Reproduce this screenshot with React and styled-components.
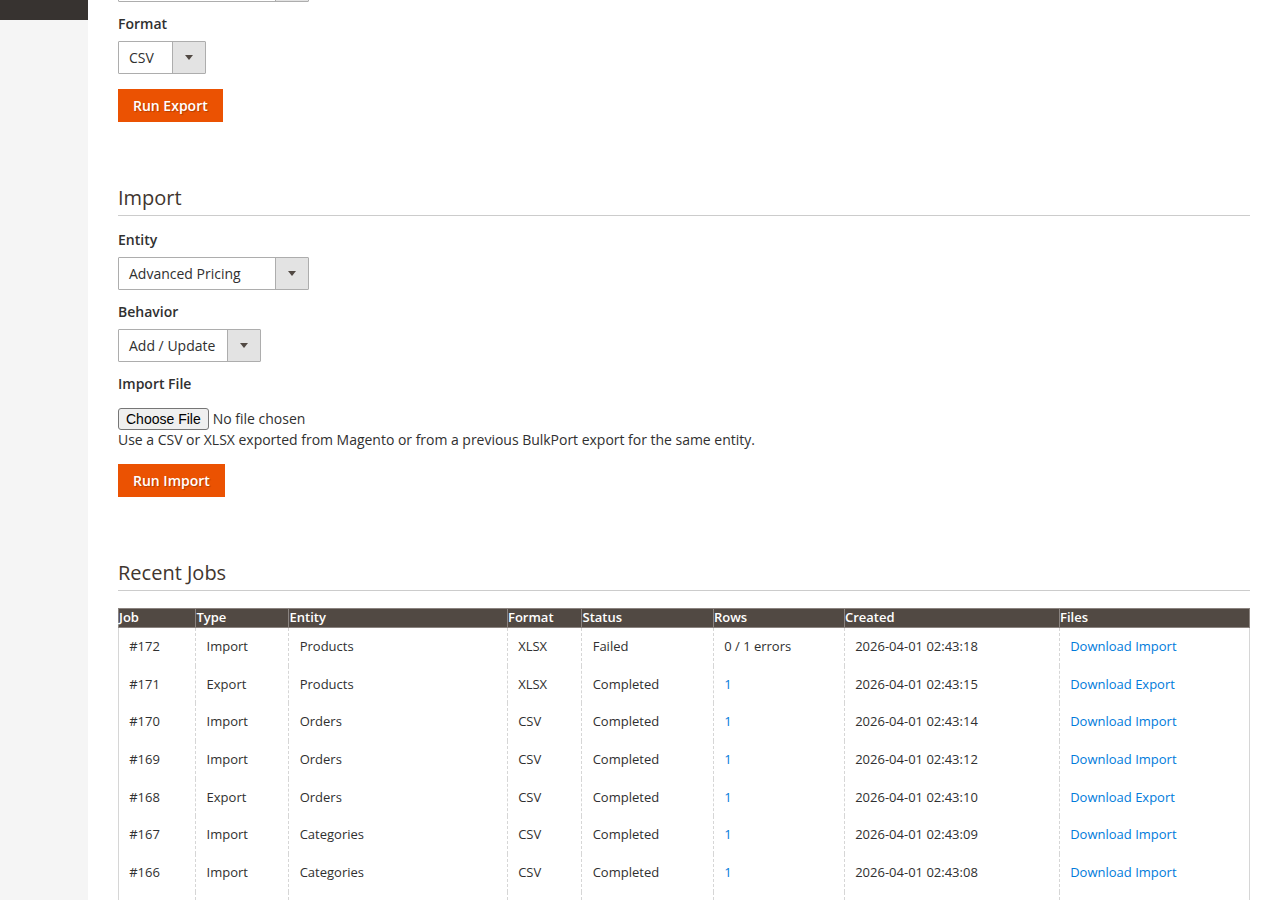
import React from 'react'
import styled, { createGlobalStyle } from 'styled-components'

const GlobalStyle = createGlobalStyle`
  html, body {
    margin: 0;
    height: 100%;
    overflow: hidden;
    background: #fff;
  }
  body {
    font-family: "Open Sans", "Liberation Sans", sans-serif;
    font-size: 14px;
    color: #303030;
  }
`

const Page = styled.div`
  display: flex;
  height: 900px;
  overflow: hidden;
`

const Sidebar = styled.aside`
  width: 88px;
  flex-shrink: 0;
  background: #f5f5f5;
`

const SidebarEnd = styled.div`
  height: 20px;
  background: #373330;
`

// the screenshot is scrolled, so the first select is cut off by the window
const Main = styled.main`
  flex: 1;
  min-width: 0;
  margin-top: -31px;
  padding: 0 30px;
`

const Field = styled.div`
  margin-bottom: ${(p) => (p.$last ? 15 : 12)}px;
`

const Label = styled.label`
  display: block;
  font-size: 14px;
  font-weight: 600;
  line-height: 19px;
  margin-bottom: 8px;
  color: #303030;
`

const SelectBox = styled.div`
  display: flex;
  width: ${(p) => p.$width}px;
  height: 33px;
  box-sizing: border-box;
  border: 1px solid #adadad;
  border-radius: 1px;
  background: #fff;
`

const SelectValue = styled.div`
  flex: 1;
  padding-left: 10px;
  font-size: 14px;
  line-height: 31px;
  color: #303030;
`

const SelectArrow = styled.div`
  width: 33px;
  box-sizing: border-box;
  display: flex;
  align-items: center;
  justify-content: center;
  background: #e3e3e3;
  border-left: 1px solid #adadad;

  &::after {
    content: '';
    border-style: solid;
    border-width: 5px 4px 0 4px;
    border-color: #514943 transparent transparent transparent;
  }
`

const PrimaryButton = styled.button`
  display: block;
  height: 33px;
  padding: 0 15px;
  border: 0;
  background: #eb5202;
  color: #fff;
  font-family: inherit;
  font-size: 14px;
  font-weight: 600;
  text-shadow: 1px 1px 1px rgba(0, 0, 0, 0.25);
  cursor: pointer;
`

const Section = styled.section`
  margin-top: 62px;
`

const SectionTitle = styled.h2`
  margin: 0 0 14px;
  padding-bottom: 3px;
  border-bottom: 1px solid #cccccc;
  font-size: 20px;
  font-weight: 400;
  line-height: 28px;
  color: #41362f;
`

const FileInput = styled.input`
  display: block;
  margin-top: 15px;
  height: 22px;
  font-family: inherit;
  font-size: 14px;
  color: #303030;

  &::file-selector-button {
    font-family: "Liberation Sans", Arial, sans-serif;
    font-size: 14px;
    height: 22px;
    padding: 0 7px;
    margin-right: 4px;
    border: 1px solid #767676;
    border-radius: 3px;
    background: #efefef;
    color: #000;
  }
`

const Hint = styled.div`
  font-size: 14px;
  line-height: 19px;
  letter-spacing: -0.02px;
  color: #303030;
`

const JobsTable = styled.table`
  width: 1131px;
  margin-top: 17px;
  table-layout: fixed;
  border-collapse: collapse;
  border-left: 1px solid #d6d6d6;
  border-right: 1px solid #d6d6d6;
`

const HeadCell = styled.th`
  padding: 0 0 1px;
  height: 17px;
  background: #514943;
  border: 1px solid #8a837f;
  color: #fff;
  font-size: 13px;
  font-weight: 600;
  line-height: 17px;
  text-align: left;
  white-space: nowrap;
`

const Cell = styled.td`
  padding: 10px 10px 10px 10.2px;
  border-left: 1px dashed #d6d6d6;
  font-size: 13px;
  line-height: 1.36;
  color: #303030;
  white-space: nowrap;
`

const Link = styled.a`
  color: #007bdb;
  text-decoration: none;
`

// next row of the table, below the fold in the screenshot
const FillerRow = styled.tr`
  height: 38px;
`

const columns = [
  ['Job', 77.4],
  ['Type', 93.1],
  ['Entity', 218.5],
  ['Format', 74.5],
  ['Status', 131.5],
  ['Rows', 131],
  ['Created', 215],
  ['Files', 190],
]

const jobs = [
  ['#172', 'Import', 'Products', 'XLSX', 'Failed', '0 / 1 errors', '2026-04-01 02:43:18'],
  ['#171', 'Export', 'Products', 'XLSX', 'Completed', '1', '2026-04-01 02:43:15'],
  ['#170', 'Import', 'Orders', 'CSV', 'Completed', '1', '2026-04-01 02:43:14'],
  ['#169', 'Import', 'Orders', 'CSV', 'Completed', '1', '2026-04-01 02:43:12'],
  ['#168', 'Export', 'Orders', 'CSV', 'Completed', '1', '2026-04-01 02:43:10'],
  ['#167', 'Import', 'Categories', 'CSV', 'Completed', '1', '2026-04-01 02:43:09'],
  ['#166', 'Import', 'Categories', 'CSV', 'Completed', '1', '2026-04-01 02:43:08'],
]

function Select({ width, value }) {
  return (
    <SelectBox $width={width}>
      <SelectValue>{value}</SelectValue>
      <SelectArrow />
    </SelectBox>
  )
}

export default function App() {
  return (
    <Page>
      <GlobalStyle />
      <Sidebar>
        <SidebarEnd />
      </Sidebar>
      <Main>
        <Field>
          <Select width={191} />
        </Field>
        <Field $last>
          <Label>Format</Label>
          <Select width={88} value="CSV" />
        </Field>
        <PrimaryButton>Run Export</PrimaryButton>

        <Section>
          <SectionTitle>Import</SectionTitle>
          <Field>
            <Label>Entity</Label>
            <Select width={191} value="Advanced Pricing" />
          </Field>
          <Field>
            <Label>Behavior</Label>
            <Select width={143} value="Add / Update" />
          </Field>
          <Field $last>
            <Label>Import File</Label>
            <FileInput type="file" />
            <Hint>Use a CSV or XLSX exported from Magento or from a previous BulkPort export for the same entity.</Hint>
          </Field>
          <PrimaryButton>Run Import</PrimaryButton>
        </Section>

        <Section>
          <SectionTitle>Recent Jobs</SectionTitle>
          <JobsTable>
            <colgroup>
              {columns.map(([name, width]) => (
                <col key={name} style={{ width }} />
              ))}
            </colgroup>
            <thead>
              <tr>
                {columns.map(([name]) => (
                  <HeadCell key={name}>{name}</HeadCell>
                ))}
              </tr>
            </thead>
            <tbody>
              {jobs.map((job) => (
                <tr key={job[0]}>
                  {job.map((value, i) => (
                    <Cell key={i}>{i === 5 && value === '1' ? <Link href="#">{value}</Link> : value}</Cell>
                  ))}
                  <Cell>
                    <Link href="#">Download {job[1]}</Link>
                  </Cell>
                </tr>
              ))}
              <FillerRow>
                {columns.map(([name]) => (
                  <Cell key={name} />
                ))}
              </FillerRow>
            </tbody>
          </JobsTable>
        </Section>
      </Main>
    </Page>
  )
}
